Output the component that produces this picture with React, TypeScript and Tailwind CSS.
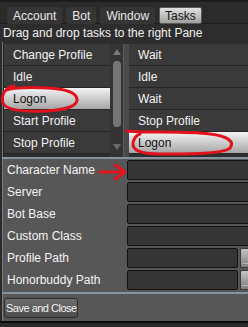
import React from 'react';

const leftTasks = ['Change Profile', 'Idle', 'Logon', 'Start Profile', 'Stop Profile'];
const rightTasks = ['Wait', 'Idle', 'Wait', 'Stop Profile', 'Logon'];
const fields = [
  { label: 'Character Name', browse: false },
  { label: 'Server', browse: false },
  { label: 'Bot Base', browse: false },
  { label: 'Custom Class', browse: false },
  { label: 'Profile Path', browse: true },
  { label: 'Honorbuddy Path', browse: true },
];

const Tab: React.FC<{ label: string; active?: boolean }> = ({ label, active }) => (
  <div
    className={
      active
        ? 'h-[17px] px-[5px] flex items-center rounded-[2px] border border-[#5a5a5a] bg-gradient-to-b from-[#e2e2e2] to-[#a0a0a0] text-[#151515]'
        : 'h-[17px] px-[6px] flex items-center rounded-[2px] bg-[#353535] text-[#e8e8e8]'
    }
  >
    {label}
  </div>
);

const TaskRow: React.FC<{ label: string; selected: boolean }> = ({ label, selected }) => (
  <div
    className={
      selected
        ? 'h-[22px] flex items-center pl-[9px] border-b border-[#2a2a2a] bg-gradient-to-b from-[#f4f4f4] to-[#a6a6a6] text-[#111]'
        : 'h-[22px] flex items-center pl-[9px] border-b border-[#262626] bg-[#3a3a3a] text-[#f2f2f2]'
    }
  >
    {label}
  </div>
);

const App: React.FC = () => {
  return (
    <div className="relative w-[248px] h-[327px] overflow-hidden bg-[#2a2a2a] flex flex-col font-['Liberation_Sans',Arial,sans-serif] text-[12px] leading-none">
      {/* tab strip */}
      <div className="h-[24px] pt-[5px] pl-[7px] flex gap-[4px] border-t-2 border-b border-t-[#1c1c1c] border-b-[#1e1e1e] bg-[#2b2b2b]">
        <Tab label="Account" />
        <Tab label="Bot" />
        <Tab label="Window" />
        <Tab label="Tasks" active />
      </div>

      <div className="h-[18px] pl-[3px] flex items-center text-[#f0f0f0] bg-[#2d2d2d]">
        Drag and drop tasks to the right Pane
      </div>

      {/* task panes */}
      <div className="h-[115px] ml-[2px] flex border-l border-[#767676] bg-[#2e2e2e] pt-[2px]">
        <div className="w-[120px] shrink-0 flex">
          <div className="flex-1 flex flex-col border-l border-[#222]">
            {leftTasks.map((t, i) => (
              <TaskRow key={i} label={t} selected={i === 2} />
            ))}
          </div>
          <div className="w-[13px] bg-[#343434] flex flex-col items-center py-[3px]">
            <div className="w-0 h-0 border-l-[4px] border-r-[4px] border-b-[6px] border-l-transparent border-r-transparent border-b-[#7a7a7a] mt-[2px]" />
            <div className="w-[8px] h-[66px] mt-[6px] rounded-[4px] bg-[#767676]" />
            <div className="flex-1" />
            <div className="w-0 h-0 border-l-[4px] border-r-[4px] border-t-[6px] border-l-transparent border-r-transparent border-t-[#6a6a6a] mb-[4px]" />
          </div>
        </div>
        <div className="w-[6px] shrink-0 bg-[#4a4a4a] border-l border-[#5c5c5c]" />
        <div className="flex-1 flex flex-col">
          {rightTasks.map((t, i) => (
            <TaskRow key={i} label={t} selected={i === 4} />
          ))}
        </div>
      </div>

      <div className="h-[2px] ml-[2px] bg-[#8593a1]" />

      {/* settings form */}
      <div className="ml-[2px] border-l border-[#7c7c7c] bg-[#575757] flex flex-col gap-[2px] pt-[1px] pb-[2px]">
        {fields.map((f) => (
          <div key={f.label} className="h-[20px] flex items-center">
            <div className="w-[124px] shrink-0 pl-[4px] text-[#f4f4f4] whitespace-nowrap">{f.label}</div>
            {f.browse ? (
              <div className="flex gap-[2px] shrink-0">
                <div className="w-[111px] h-[20px] rounded-[2px] border border-[#111] bg-[#353535]" />
                <div className="w-[9px] h-[20px] rounded-l-[2px] border border-r-0 border-[#3a3a3a] bg-gradient-to-b from-[#c4c4c4] to-[#7e7e7e] flex items-end justify-center text-[8px] leading-[10px] text-white">
                  ...
                </div>
              </div>
            ) : (
              <div className="w-[126px] h-[20px] shrink-0 rounded-[2px] border border-[#111] bg-[#353535]" />
            )}
          </div>
        ))}
      </div>

      <div className="h-[2px] ml-[2px] bg-[#8593a1]" />

      <div className="h-[27px] ml-[2px] border-l border-[#7c7c7c] bg-[#575757] pl-[1px] pt-[4px]">
        <button className="w-[74px] h-[20px] rounded-[3px] border border-[#2e2e2e] bg-gradient-to-b from-[#6e6e6e] to-[#4c4c4c] text-[11px] tracking-[-0.5px] text-[#f2f2f2] pl-[1px] text-left whitespace-nowrap overflow-hidden">
          Save and Close
        </button>
      </div>

      <div className="h-[2px] bg-[#0c0c0c]" />
      <div className="flex-1 bg-[#2a2a2a]" />

      {/* red markup drawn over the screenshot */}
      <svg className="absolute inset-0 pointer-events-none" width="248" height="327" viewBox="0 0 248 327" fill="none">
        <path
          d="M 14 86 C 4 88, 1 96, 3 103 C 6 110, 24 112, 46 111 C 66 110, 78 106, 77 99 C 76 92, 66 89, 48 88 C 30 87, 14 88, 6 90"
          stroke="#e1121b"
          strokeWidth="3"
          strokeLinecap="round"
        />
        <path
          d="M 127 131 C 150 133, 185 131, 210 134 C 228 136, 235 142, 230 148 C 224 154, 190 154, 160 154 C 140 154, 132 150, 133 143 C 134 138, 137 135, 140 134"
          stroke="#e1121b"
          strokeWidth="3"
          strokeLinecap="round"
        />
        <path d="M 100 172 L 123 172" stroke="#e4141d" strokeWidth="3" strokeLinecap="round" />
        <path d="M 115 165 L 125 172 L 115 179" stroke="#e4141d" strokeWidth="3" strokeLinecap="round" strokeLinejoin="round" />
      </svg>
    </div>
  );
};

export default App;
